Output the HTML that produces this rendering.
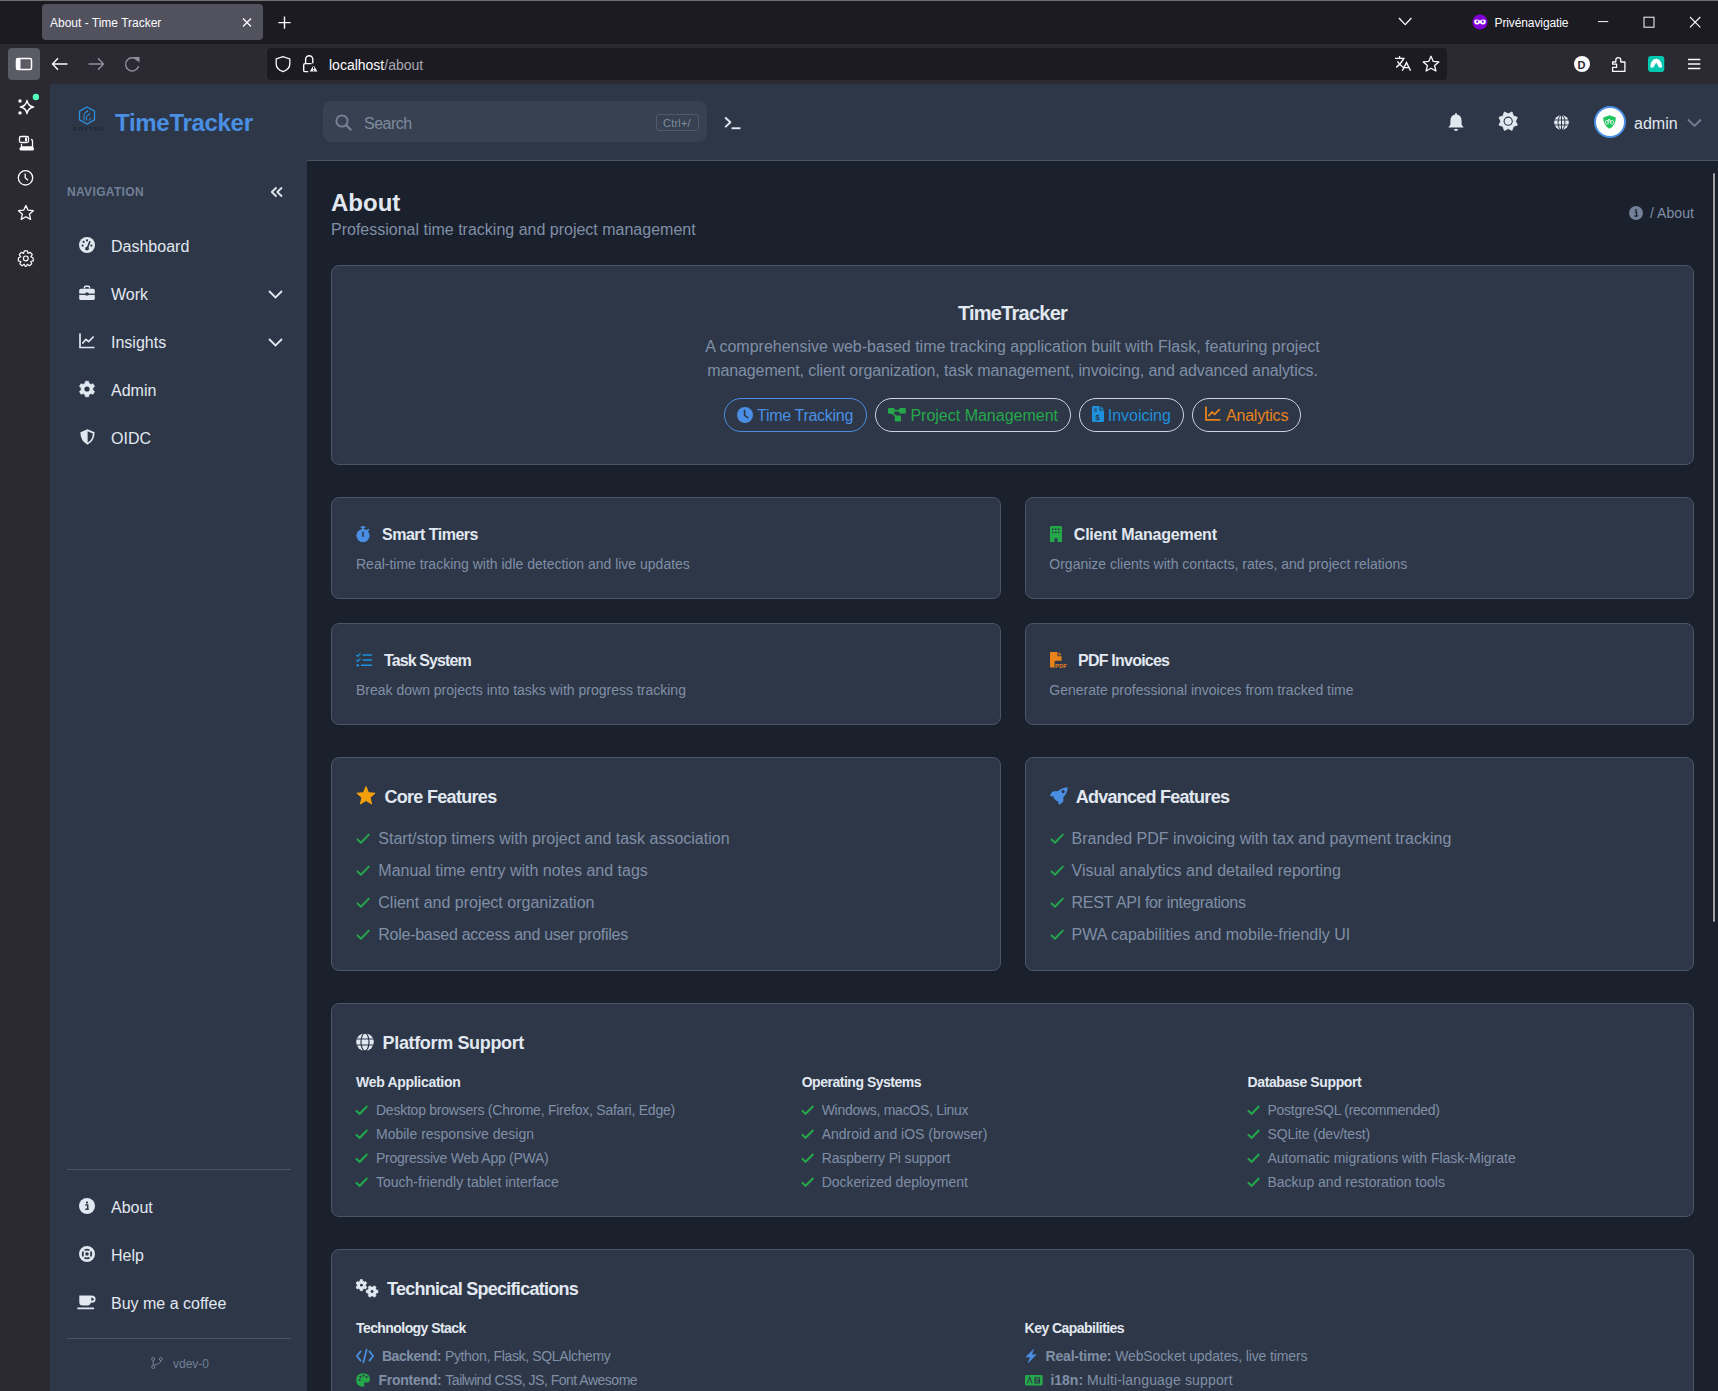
<!DOCTYPE html>
<html><head><meta charset="utf-8"><title>About - Time Tracker</title>
<style>
*{box-sizing:border-box}
html,body{margin:0;padding:0}
body{width:1718px;height:1391px;overflow:hidden;position:relative;background:#1a202c;font-family:"Liberation Sans",sans-serif;color:#e2e8f0}
.abs{position:absolute}
.t{position:absolute;white-space:nowrap}
svg{display:block}
.card{position:absolute;background:#2d3748;border:1px solid #4a5568;border-radius:8px}
.ic{position:absolute;overflow:visible}
</style></head>
<body>
<svg class="abs" style="left:0;top:0" width="1718" height="84" viewBox="0 0 1718 84">
  <rect x="0" y="0" width="1718" height="1" fill="#6f6f70"/>
  <rect x="0" y="1" width="1718" height="43" fill="#1c1b22"/>
  <rect x="42" y="4" width="221" height="36" rx="4" fill="#52515e"/>
  <text x="50" y="26.5" font-family="Liberation Sans" font-size="12" fill="#fbfbfe">About - Time Tracker</text>
  <path d="M243 18.5 L251 26.5 M251 18.5 L243 26.5" stroke="#fbfbfe" stroke-width="1.3" fill="none"/>
  <path d="M284.5 16.5 V28.8 M278.4 22.6 H290.6" stroke="#fbfbfe" stroke-width="1.4" fill="none"/>
  <path d="M1399 18 L1405.2 24.6 L1411.4 18" stroke="#fbfbfe" stroke-width="1.3" fill="none"/>
  <circle cx="1480" cy="22" r="7.6" fill="#8000d7"/>
  <path d="M1474.2 20.2 Q1476.8 18.6 1480 20.4 Q1483.2 18.6 1485.8 20.2 Q1486.2 24.4 1483 24.6 Q1481 24.6 1480 23 Q1479 24.6 1477 24.6 Q1473.8 24.4 1474.2 20.2Z" fill="#fff"/>
  <circle cx="1477.3" cy="21.7" r="1.1" fill="#8000d7"/><circle cx="1482.7" cy="21.7" r="1.1" fill="#8000d7"/>
  <text x="1494.5" y="27" font-family="Liberation Sans" font-size="12" fill="#fbfbfe" textLength="74">Privénavigatie</text>
  <path d="M1598 21.6 H1608.2" stroke="#fbfbfe" stroke-width="1" fill="none"/>
  <rect x="1644" y="17.2" width="10" height="10" fill="none" stroke="#fbfbfe" stroke-width="1"/>
  <path d="M1690 17 L1700.3 27.3 M1700.3 17 L1690 27.3" stroke="#fbfbfe" stroke-width="1.1" fill="none"/>
  <rect x="0" y="44" width="1718" height="40" fill="#2b2a33"/>
  <rect x="8" y="48" width="32" height="32" rx="4" fill="#5b5b66"/>
  <rect x="16.5" y="58.5" width="15" height="11" rx="1.5" fill="none" stroke="#fbfbfe" stroke-width="1.5"/>
  <rect x="16.5" y="58.5" width="4" height="11" fill="#fbfbfe"/>
  <path d="M52.5 64 H67.5 M58 58.3 L52.5 64 L58 69.7" stroke="#fbfbfe" stroke-width="1.4" fill="none"/>
  <path d="M88.5 64 H103.5 M98 58.3 L103.5 64 L98 69.7" stroke="#8f8f9d" stroke-width="1.4" fill="none"/>
  <path d="M137.6 60.5 A6.6 6.6 0 1 0 138.6 66" stroke="#8f8f9d" stroke-width="1.4" fill="none"/>
  <path d="M133.5 57 L139.5 57 L139.5 62.5 Z" fill="#8f8f9d"/>
  <rect x="267" y="48" width="1180" height="32" rx="4" fill="#1c1b22"/>
  <path d="M283 56.6 L276.2 59 V64 Q276.2 69.2 283 71.6 Q289.8 69.2 289.8 64 V59 Z" stroke="#fbfbfe" stroke-width="1.3" fill="none"/>
  <path d="M305.6 63.4 V59.4 A3.6 3.6 0 0 1 312.8 59.4 V63.4" stroke="#fbfbfe" stroke-width="1.4" fill="none"/>
  <path d="M311.6 63.6 H305 Q303.7 63.6 303.7 64.9 V70.4 Q303.7 71.6 305 71.6 H308.4" stroke="#fbfbfe" stroke-width="1.4" fill="none"/>
  <path d="M313.6 64 L318.4 72 H308.8 Z" fill="#fbfbfe" stroke="#1c1b22" stroke-width="1.2" stroke-linejoin="round"/>
  <path d="M313.6 66.4 V69.3" stroke="#1c1b22" stroke-width="1.2"/><circle cx="313.6" cy="70.6" r="0.65" fill="#1c1b22"/>
  <text x="329" y="69.6" font-family="Liberation Sans" font-size="14" fill="#fbfbfe">localhost<tspan fill="#a9a9b3">/about</tspan></text>
  <path d="M1395 58.3 H1404.6 M1399.6 56 V58.3 M1403.8 58.4 Q1400.5 64.5 1396.2 67.4 M1397.4 61.4 Q1400 65 1403.6 67.8" stroke="#fbfbfe" stroke-width="1.3" fill="none"/>
  <path d="M1402.3 70.8 L1406.5 62.6 L1410.6 70.8 M1403.8 67.6 H1409.2" stroke="#fbfbfe" stroke-width="1.4" fill="none"/>
  <path d="M1431 56.3 L1433.3 61.4 L1438.8 61.9 L1434.6 65.6 L1435.9 71 L1431 68.2 L1426.1 71 L1427.4 65.6 L1423.2 61.9 L1428.7 61.4 Z" stroke="#fbfbfe" stroke-width="1.3" fill="none" stroke-linejoin="round"/>
  <circle cx="1582" cy="64" r="8" fill="#fbfbfe"/>
  <text x="1577.6" y="68.6" font-family="Liberation Sans" font-size="11" font-weight="bold" fill="#2b2a33">D</text>
  <path d="M1612.6 62 H1615.8 V60.2 A2.5 2.5 0 0 1 1620.8 60.2 V62 H1624.9 V71.4 H1612.6 V67.4 H1616.6 V64.2 H1612.6 Z" stroke="#fbfbfe" stroke-width="1.3" fill="none" stroke-linejoin="round"/>
  <rect x="1648" y="56" width="16.3" height="16" rx="3" fill="#00c9b1"/>
  <path d="M1650.4 67.4 C1650.4 56 1662 56 1662 67.4 L1659 67.4 L1656.2 62.4 L1653.4 67.4 Z" fill="#fff"/>
  <path d="M1688 59.5 H1700.3 M1688 64 H1700.3 M1688 68.5 H1700.3" stroke="#fbfbfe" stroke-width="1.4" fill="none"/>
</svg>
<svg class="abs" style="left:0;top:84px" width="50" height="1307" viewBox="0 84 50 1307">
  <rect x="0" y="84" width="50" height="1307" fill="#2b2a33"/>
  <circle cx="35.9" cy="97" r="3.2" fill="#54ffbd"/>
  <path d="M27 100.5 Q28 106 33.6 107 Q28 108 27 113.5 Q26 108 20.4 107 Q26 106 27 100.5Z" stroke="#fbfbfe" stroke-width="1.4" fill="none" stroke-linejoin="round"/>
  <circle cx="20" cy="101" r="1.7" fill="#fbfbfe"/><circle cx="20" cy="112.9" r="1.7" fill="#fbfbfe"/>
  <rect x="19.5" y="136.5" width="9" height="6" rx="1.5" stroke="#fbfbfe" stroke-width="1.3" fill="none"/>
  <rect x="25" y="137.5" width="2" height="4" fill="#fbfbfe"/>
  <path d="M31 139.5 Q32.5 139.5 32.5 141 V147 H21.5 V144" stroke="#fbfbfe" stroke-width="1.3" fill="none"/>
  <rect x="19.5" y="147" width="14.5" height="3.6" rx="1.6" fill="#fbfbfe"/>
  <circle cx="25.5" cy="177.8" r="7.2" stroke="#fbfbfe" stroke-width="1.3" fill="none"/>
  <path d="M25.2 173.5 V177.8 L28 180.3" stroke="#fbfbfe" stroke-width="1.3" fill="none"/>
  <path d="M25.9 205.4 L28.1 210.2 L33.3 210.7 L29.4 214.2 L30.6 219.4 L25.9 216.7 L21.2 219.4 L22.4 214.2 L18.5 210.7 L23.7 210.2 Z" stroke="#fbfbfe" stroke-width="1.3" fill="none" stroke-linejoin="round"/>
  <path id="fxgear" d="M24.4 250.8 H27.4 L28 253.4 L30.4 252.3 L32.3 254.6 L30.8 256.8 L33.2 258 V260.9 L30.7 261.5 L31.8 263.9 L29.5 265.8 L27.4 264.3 L26.1 266.5 H25.4 L24.2 264.3 L22 265.8 L19.8 263.9 L20.9 261.5 L18.4 260.9 V258 L20.8 256.8 L19.3 254.6 L21.2 252.3 L23.6 253.4 Z" stroke="#fbfbfe" stroke-width="1.2" fill="none" stroke-linejoin="round"/>
  <circle cx="25.8" cy="258.4" r="2.4" stroke="#fbfbfe" stroke-width="1.2" fill="none"/>
</svg>

<div class="abs" style="left:50px;top:84px;width:257px;height:1307px;background:#2d3748"></div>
<div class="abs" style="left:307px;top:84px;width:1411px;height:77px;background:#2d3748;border-bottom:1px solid #4a5568"></div>
<div class="abs" style="left:1712px;top:172px;width:4px;height:751px;background:#151a24;border-radius:2px"></div>
<div class="abs" style="left:1713px;top:173px;width:2px;height:749px;background:#a3a3a3;border-radius:1px"></div>
<svg class="ic" style="left:78px;top:106px" width="18" height="19" viewBox="0 0 18 19"><path d="M9 1 L16.5 5.2 V13.8 L9 18 L1.5 13.8 V5.2 Z" fill="none" stroke="#2f8fe0" stroke-width="1.3"/><path d="M6 14.5 V9.5 Q6 6.5 9 5.5 M8.5 14.5 V11 Q8.5 9 11 8.5 M11.5 14.5 Q11.5 12.5 13 12" fill="none" stroke="#2f8fe0" stroke-width="1"/><circle cx="9.3" cy="5.3" r="1" fill="#2f8fe0"/><circle cx="11.2" cy="8.3" r="0.9" fill="#2f8fe0"/></svg>
<div class="t" style="left:73px;top:124px;font-size:11px;line-height:11px;color:#1f2633;font-weight:bold;letter-spacing:1.2px;font-size:6px;">DRYTRA</div>
<div class="t" style="left:115px;top:111px;font-size:24px;line-height:24px;color:#4a8fe3;font-weight:bold;letter-spacing:-0.3px;">TimeTracker</div>
<div class="t" style="left:67px;top:186px;font-size:12px;line-height:12px;color:#718096;font-weight:bold;letter-spacing:0.34px;">NAVIGATION</div>
<svg class="ic" style="left:270px;top:186px" width="14" height="12" viewBox="0 0 14 12"><path d="M6.5 1.5 L1.8 6 L6.5 10.5 M12 1.5 L7.3 6 L12 10.5" fill="none" stroke="#e2e8f0" stroke-width="1.8" stroke-linejoin="round"/></svg>
<svg class="ic" style="left:268px;top:290px" width="15" height="9" viewBox="0 0 15 9"><path d="M1 1 L7.5 7.5 L14 1" fill="none" stroke="#e2e8f0" stroke-width="1.8"/></svg>
<svg class="ic" style="left:268px;top:338px" width="15" height="9" viewBox="0 0 15 9"><path d="M1 1 L7.5 7.5 L14 1" fill="none" stroke="#e2e8f0" stroke-width="1.8"/></svg>
<div class="t" style="left:111px;top:239px;font-size:16px;line-height:16px;color:#e2e8f0;">Dashboard</div>
<div class="t" style="left:111px;top:287px;font-size:16px;line-height:16px;color:#e2e8f0;">Work</div>
<div class="t" style="left:111px;top:335px;font-size:16px;line-height:16px;color:#e2e8f0;">Insights</div>
<div class="t" style="left:111px;top:383px;font-size:16px;line-height:16px;color:#e2e8f0;">Admin</div>
<div class="t" style="left:111px;top:431px;font-size:16px;line-height:16px;color:#e2e8f0;">OIDC</div>
<svg class="ic" style="left:79px;top:237px" width="16" height="16" viewBox="0 0 16 16"><circle cx="8" cy="8" r="8" fill="#e2e8f0"/><path d="M8 12 L10.8 4.8" stroke="#2d3748" stroke-width="1.7" stroke-linecap="round"/><circle cx="8" cy="11.6" r="1.9" fill="#2d3748"/><circle cx="3.6" cy="8.6" r="1.1" fill="#2d3748"/><circle cx="4.6" cy="4.9" r="1.1" fill="#2d3748"/><circle cx="8" cy="3.4" r="1.1" fill="#2d3748"/><circle cx="12.4" cy="8.6" r="1.1" fill="#2d3748"/></svg>
<svg class="ic" style="left:79px;top:285px" width="16" height="16" viewBox="0 0 16 16"><path d="M5.5 3.5 V2.2 Q5.5 1.2 6.5 1.2 H9.5 Q10.5 1.2 10.5 2.2 V3.5" fill="none" stroke="#e2e8f0" stroke-width="1.5"/><rect x="0.2" y="3.8" width="15.6" height="11.2" rx="1.6" fill="#e2e8f0"/><rect x="0" y="8.6" width="16" height="1.3" fill="#2d3748"/><rect x="6.5" y="7.6" width="3" height="3" rx="0.5" fill="#2d3748"/></svg>
<svg class="ic" style="left:79px;top:333px" width="16" height="16" viewBox="0 0 16 16"><path d="M1 0.5 V14.5 H15.5" fill="none" stroke="#e2e8f0" stroke-width="1.7"/><path d="M3.8 10 L7 6.3 L9.6 8.6 L14.2 4" fill="none" stroke="#e2e8f0" stroke-width="1.7" stroke-linejoin="round" stroke-linecap="round"/></svg>
<svg class="ic" style="left:79px;top:381px" width="16" height="16" viewBox="0 0 16 16"><path d="M6.03 2.33 L6.43 0.16 L9.57 0.16 L9.97 2.33 L11.93 3.46 L14.01 2.72 L15.58 5.44 L13.89 6.87 L13.89 9.13 L15.58 10.56 L14.01 13.28 L11.93 12.54 L9.97 13.67 L9.57 15.84 L6.43 15.84 L6.03 13.67 L4.07 12.54 L1.99 13.28 L0.42 10.56 L2.11 9.13 L2.11 6.87 L0.42 5.44 L1.99 2.72 L4.07 3.46Z" fill="#e2e8f0" stroke="#e2e8f0" stroke-width="0.6" stroke-linejoin="round"/><circle cx="8" cy="8" r="2.6" fill="#2d3748"/></svg>
<svg class="ic" style="left:80px;top:429px" width="15" height="16" viewBox="0 0 15 16"><path d="M7.5 0.3 L14.6 3.2 Q14.8 11.5 7.5 15.7 Q0.2 11.5 0.4 3.2 Z" fill="#e2e8f0"/><path d="M7.6 2.3 L12.8 4.5 Q12.8 10.8 7.6 13.6 Z" fill="#2d3748"/></svg>
<div class="abs" style="left:67px;top:1169px;width:224px;height:1px;background:#4a5568"></div>
<div class="abs" style="left:67px;top:1338px;width:224px;height:1px;background:#4a5568"></div>
<div class="t" style="left:111px;top:1200px;font-size:16px;line-height:16px;color:#e2e8f0;">About</div>
<div class="t" style="left:111px;top:1248px;font-size:16px;line-height:16px;color:#e2e8f0;">Help</div>
<div class="t" style="left:111px;top:1296px;font-size:16px;line-height:16px;color:#e2e8f0;">Buy me a coffee</div>
<svg class="ic" style="left:79px;top:1198px" width="16" height="16" viewBox="0 0 16 16"><circle cx="8" cy="8" r="8" fill="#e2e8f0"/><circle cx="8" cy="4.6" r="1.1" fill="#2d3748"/><path d="M6.3 7 H8.7 V11 M6.3 11.3 H9.8" stroke="#2d3748" stroke-width="1.5" fill="none"/></svg>
<svg class="ic" style="left:79px;top:1246px" width="16" height="16" viewBox="0 0 16 16"><circle cx="8" cy="8" r="6.6" fill="none" stroke="#e2e8f0" stroke-width="2.8"/><circle cx="8" cy="8" r="2.6" fill="none" stroke="#e2e8f0" stroke-width="1.6"/><path d="M3.6 3.6 L6 6 M12.4 3.6 L10 6 M3.6 12.4 L6 10 M12.4 12.4 L10 10" stroke="#e2e8f0" stroke-width="1.6"/><path d="M1.2 5.2 A7.2 7.2 0 0 1 5.2 1.2 M10.8 1.2 A7.2 7.2 0 0 1 14.8 5.2 M14.8 10.8 A7.2 7.2 0 0 1 10.8 14.8 M5.2 14.8 A7.2 7.2 0 0 1 1.2 10.8" stroke="#2d3748" stroke-width="0" fill="none"/></svg>
<svg class="ic" style="left:77px;top:1295px" width="20" height="15" viewBox="0 0 20 15"><path d="M2.3 0.6 H14.5 Q18.6 0.6 18.6 4.2 Q18.6 7.8 14.5 7.8 H13.8 Q13.2 10.6 10 10.6 H5.6 Q2.3 10.6 2.3 7.3 Z" fill="#e2e8f0"/><path d="M14.3 2.6 Q16.7 2.6 16.7 4.2 Q16.7 5.8 14.3 5.8 Z" fill="#2d3748"/><rect x="0.3" y="12.4" width="16.8" height="1.9" rx="0.4" fill="#e2e8f0"/></svg>
<svg class="ic" style="left:151px;top:1357px" width="12" height="12" viewBox="0 0 12 12"><circle cx="2.2" cy="2" r="1.5" fill="none" stroke="#718096" stroke-width="1"/><circle cx="2.2" cy="10" r="1.5" fill="none" stroke="#718096" stroke-width="1"/><circle cx="9.8" cy="2" r="1.5" fill="none" stroke="#718096" stroke-width="1"/><path d="M2.2 3.5 V8.5 M9.8 3.5 Q9.8 6.8 2.8 8.2" fill="none" stroke="#718096" stroke-width="1"/></svg>
<div class="t" style="left:173px;top:1358px;font-size:12px;line-height:12px;color:#718096;">vdev-0</div>
<div class="abs" style="left:323px;top:101px;width:384px;height:41px;background:#374151;border-radius:8px"></div>
<svg class="ic" style="left:335px;top:114px" width="17" height="17" viewBox="0 0 17 17"><circle cx="7" cy="7" r="5.6" fill="none" stroke="#718096" stroke-width="2"/><path d="M11 11 L15.6 15.6" stroke="#718096" stroke-width="2.2" stroke-linecap="round"/></svg>
<div class="t" style="left:364px;top:116px;font-size:16px;line-height:16px;color:#7e8b9f;letter-spacing:-0.5px;">Search</div>
<div class="abs" style="left:656px;top:114px;width:43px;height:17px;border:1px solid #4f5a6b;border-radius:3px"></div>
<div class="t" style="left:663px;top:118px;font-size:11px;line-height:11px;color:#7e8b9f;letter-spacing:0.2px;">Ctrl+/</div>
<svg class="ic" style="left:724px;top:116px" width="17" height="14" viewBox="0 0 17 14"><path d="M1.2 1.5 L6.4 6.3 L1.2 11.1" fill="none" stroke="#e2e8f0" stroke-width="1.9" stroke-linejoin="round"/><rect x="7.6" y="11.3" width="8.8" height="1.9" fill="#e2e8f0"/></svg>
<svg class="ic" style="left:1447px;top:112px" width="18" height="20" viewBox="0 0 18 20"><path d="M9 1 Q9.9 1 9.9 2 V2.6 Q14.6 3.4 14.6 9 V12.6 L16.6 15.6 H1.4 L3.4 12.6 V9 Q3.4 3.4 8.1 2.6 V2 Q8.1 1 9 1Z" fill="#e2e8f0"/><path d="M7 17 H11 Q11 19 9 19 Q7 19 7 17Z" fill="#e2e8f0"/></svg>
<svg class="ic" style="left:1498px;top:111px" width="21" height="21" viewBox="0 0 21 21"><path d="M14.03 0.96 L15.43 4.97 L19.44 6.37 L17.60 10.20 L19.44 14.03 L15.43 15.43 L14.03 19.44 L10.20 17.60 L6.37 19.44 L4.97 15.43 L0.96 14.03 L2.80 10.20 L0.96 6.37 L4.97 4.97 L6.37 0.96 L10.20 2.80Z" fill="#e2e8f0" stroke="#e2e8f0" stroke-width="0.8" stroke-linejoin="round"/><circle cx="10.2" cy="10.2" r="4.6" fill="#2d3748"/><circle cx="10.2" cy="10.2" r="3.5" fill="#e2e8f0"/></svg>
<svg class="ic" style="left:1554px;top:115px" width="15" height="15" viewBox="0 0 15 15"><circle cx="7.5" cy="7.5" r="7.3" fill="#e2e8f0"/><path d="M0 5 H15 M0 10 H15" stroke="#2d3748" stroke-width="1.1"/><path d="M7.5 0 V15" stroke="#2d3748" stroke-width="1"/><ellipse cx="7.5" cy="7.5" rx="3.4" ry="7.3" fill="none" stroke="#2d3748" stroke-width="1"/></svg>
<div class="abs" style="left:1594px;top:106px;width:32px;height:32px;border-radius:50%;background:#fff;border:2px solid #4a8fe3"></div>
<svg class="ic" style="left:1603px;top:115px" width="13" height="14" viewBox="0 0 13 14"><path d="M6.5 0.3 L12.8 2.5 Q13 10.3 6.5 13.7 Q0 10.3 0.2 2.5 Z" fill="#22c55e"/><circle cx="4" cy="7.3" r="1.8" fill="none" stroke="#fff" stroke-width="0.8"/><circle cx="9" cy="7.3" r="1.8" fill="none" stroke="#fff" stroke-width="0.8"/><path d="M4 7.3 L6 4.6 L9 7.3 M5.2 4.6 H7" stroke="#fff" stroke-width="0.8" fill="none"/></svg>
<div class="t" style="left:1634px;top:116px;font-size:16px;line-height:16px;color:#e2e8f0;">admin</div>
<svg class="ic" style="left:1687px;top:118px" width="15" height="10" viewBox="0 0 15 10"><path d="M1 1.5 L7.5 8 L14 1.5" fill="none" stroke="#718096" stroke-width="1.8"/></svg>
<div class="t" style="left:331px;top:191px;font-size:24px;line-height:24px;color:#e2e8f0;font-weight:bold;">About</div>
<div class="t" style="left:331px;top:222px;font-size:16px;line-height:16px;color:#808fa6;">Professional time tracking and project management</div>
<svg class="ic" style="left:1629px;top:206px" width="14" height="14" viewBox="0 0 14 14"><circle cx="7" cy="7" r="7" fill="#718096"/><circle cx="7" cy="4" r="1" fill="#1a202c"/><path d="M5.6 6.2 H7.6 V9.8 M5.5 10 H8.8" stroke="#1a202c" stroke-width="1.3" fill="none"/></svg>
<div class="t" style="left:1650px;top:206px;font-size:14px;line-height:14px;color:#808fa6;letter-spacing:0.05px;">/ About</div>
<div class="card" style="left:331px;top:265px;width:1363px;height:200px"></div>
<div class="card" style="left:331px;top:497px;width:670px;height:102px"></div>
<div class="card" style="left:1025px;top:497px;width:669px;height:102px"></div>
<div class="card" style="left:331px;top:623px;width:670px;height:102px"></div>
<div class="card" style="left:1025px;top:623px;width:669px;height:102px"></div>
<div class="card" style="left:331px;top:757px;width:670px;height:214px"></div>
<div class="card" style="left:1025px;top:757px;width:669px;height:214px"></div>
<div class="card" style="left:331px;top:1003px;width:1363px;height:214px"></div>
<div class="card" style="left:331px;top:1249px;width:1363px;height:200px"></div>
<div class="t" style="left:331px;width:1363px;text-align:center;top:303px;font-size:20px;line-height:20px;font-weight:bold;letter-spacing:-0.77px;color:#e2e8f0">TimeTracker</div>
<div class="t" style="left:331px;width:1363px;text-align:center;top:339px;font-size:16px;line-height:16px;color:#808fa6">A comprehensive web-based time tracking application built with Flask, featuring project</div>
<div class="t" style="left:331px;width:1363px;text-align:center;top:363px;font-size:16px;line-height:16px;letter-spacing:-0.1px;color:#808fa6">management, client organization, task management, invoicing, and advanced analytics.</div>
<div class="abs" style="left:724px;top:398px;width:143px;height:34px;border:1px solid #4a8fe3;border-radius:17px"></div>
<div class="abs" style="left:875px;top:398px;width:196px;height:34px;border:1px solid #cfd4dc;border-radius:17px"></div>
<div class="abs" style="left:1079px;top:398px;width:105px;height:34px;border:1px solid #cfd4dc;border-radius:17px"></div>
<div class="abs" style="left:1192px;top:398px;width:109px;height:34px;border:1px solid #cfd4dc;border-radius:17px"></div>
<div class="t" style="left:757px;top:408px;font-size:16px;line-height:16px;color:#4a8fe3;letter-spacing:-0.3px;">Time Tracking</div>
<div class="t" style="left:910.4px;top:408px;font-size:16px;line-height:16px;color:#25a84a;">Project Management</div>
<div class="t" style="left:1107.7px;top:408px;font-size:16px;line-height:16px;color:#1e90dc;">Invoicing</div>
<div class="t" style="left:1226px;top:408px;font-size:16px;line-height:16px;color:#e8821a;letter-spacing:-0.2px;">Analytics</div>
<svg class="ic" style="left:737px;top:407px" width="16" height="16" viewBox="0 0 16 16"><circle cx="8" cy="8" r="8" fill="#4a8fe3"/><path d="M7.6 3.6 V8.4 L10.8 10.6" stroke="#2d3748" stroke-width="1.7" fill="none" stroke-linecap="round"/></svg>
<svg class="ic" style="left:888px;top:407px" width="18" height="15" viewBox="0 0 18 15"><rect x="0" y="1" width="6.4" height="5.8" rx="1" fill="#25a84a"/><rect x="11.2" y="1" width="6.6" height="5.4" rx="1" fill="#25a84a"/><rect x="6.8" y="8.6" width="6.2" height="5.8" rx="1" fill="#25a84a"/><path d="M5 3.6 H12 M3.4 5.5 L8.6 10" stroke="#25a84a" stroke-width="1.6"/></svg>
<svg class="ic" style="left:1092px;top:406px" width="12" height="16" viewBox="0 0 12 16"><path d="M0 1.2 Q0 0 1.2 0 H7.5 V4.5 H12 V14.8 Q12 16 10.8 16 H1.2 Q0 16 0 14.8 Z" fill="#1e90dc"/><path d="M8.5 0 L12 3.5 H8.5 Z" fill="#1e90dc"/><text x="3.4" y="13.5" font-family="Liberation Sans" font-size="7.5" font-weight="bold" fill="#2d3748">$</text><path d="M2 3 H5 M2 5 H5" stroke="#2d3748" stroke-width="0.9"/></svg>
<svg class="ic" style="left:1205px;top:406px" width="16" height="15" viewBox="0 0 16 15"><path d="M1 0.5 V13.8 H15.5" fill="none" stroke="#e8821a" stroke-width="1.8"/><path d="M3.8 9.6 L7 6 L9.6 8.3 L14.3 3.6" fill="none" stroke="#e8821a" stroke-width="1.8" stroke-linejoin="round" stroke-linecap="round"/></svg>
<div class="t" style="left:382px;top:527px;font-size:16px;line-height:16px;color:#e2e8f0;font-weight:bold;letter-spacing:-0.5px;">Smart Timers</div>
<div class="t" style="left:356px;top:557px;font-size:14px;line-height:14px;color:#808fa6;">Real-time tracking with idle detection and live updates</div>
<div class="t" style="left:1073.8px;top:527px;font-size:16px;line-height:16px;color:#e2e8f0;font-weight:bold;letter-spacing:-0.22px;">Client Management</div>
<div class="t" style="left:1049.3px;top:557px;font-size:14px;line-height:14px;color:#808fa6;">Organize clients with contacts, rates, and project relations</div>
<div class="t" style="left:384px;top:653px;font-size:16px;line-height:16px;color:#e2e8f0;font-weight:bold;letter-spacing:-0.89px;">Task System</div>
<div class="t" style="left:356px;top:683px;font-size:14px;line-height:14px;color:#808fa6;">Break down projects into tasks with progress tracking</div>
<div class="t" style="left:1078px;top:653px;font-size:16px;line-height:16px;color:#e2e8f0;font-weight:bold;letter-spacing:-0.77px;">PDF Invoices</div>
<div class="t" style="left:1049.3px;top:683px;font-size:14px;line-height:14px;color:#808fa6;">Generate professional invoices from tracked time</div>
<svg class="ic" style="left:356px;top:526px" width="15" height="17" viewBox="0 0 15 17"><circle cx="7" cy="9.6" r="6.6" fill="#4a8fe3"/><rect x="4.6" y="0.2" width="4.8" height="1.8" rx="0.8" fill="#4a8fe3"/><rect x="6.1" y="1.6" width="1.8" height="2.4" fill="#4a8fe3"/><path d="M11.4 4.6 L12.4 3.6" stroke="#4a8fe3" stroke-width="1.8" stroke-linecap="round"/><path d="M7 6.4 V10.2" stroke="#2d3748" stroke-width="1.6" stroke-linecap="round"/></svg>
<svg class="ic" style="left:1050px;top:526px" width="12" height="16" viewBox="0 0 12 16"><path d="M0 1.2 Q0 0 1.2 0 H10.8 Q12 0 12 1.2 V16 H7.6 V12.6 Q6 11.4 4.4 12.6 V16 H0 Z" fill="#25a84a"/><rect x="2" y="2.4" width="1.6" height="1.6" fill="#2d3748"/><rect x="2" y="5.6" width="1.6" height="1.6" fill="#2d3748"/><rect x="5" y="2.4" width="1.6" height="1.6" fill="#2d3748"/><rect x="5" y="5.6" width="1.6" height="1.6" fill="#2d3748"/><rect x="8" y="2.4" width="1.6" height="1.6" fill="#2d3748"/><rect x="8" y="5.6" width="1.6" height="1.6" fill="#2d3748"/></svg>
<svg class="ic" style="left:356px;top:653px" width="16" height="14" viewBox="0 0 16 14"><path d="M0.6 2.3 L1.8 3.4 L4 0.8 M0.6 7.3 L1.8 8.4 L4 5.8" stroke="#1e90dc" stroke-width="1.3" fill="none" stroke-linecap="round"/><circle cx="1.8" cy="12.2" r="1.3" fill="#1e90dc"/><path d="M6.6 2 H16 M6.6 7 H16 M5 12.2 H16" stroke="#1e90dc" stroke-width="1.5"/></svg>
<svg class="ic" style="left:1050px;top:652px" width="16" height="16" viewBox="0 0 16 16"><path d="M0 1.2 Q0 0 1.2 0 H7.5 V4.3 H11.6 V8.8 H6 Q4.6 8.8 4.6 10.2 V15.6 H1.2 Q0 15.6 0 14.4 Z" fill="#e8821a"/><path d="M8.6 0.2 L11.6 3.3 H8.6 Z" fill="#e8821a"/><text x="5" y="15.6" font-family="Liberation Sans" font-size="5.8" font-weight="bold" fill="#e8821a" letter-spacing="0.1">PDF</text></svg>
<div class="t" style="left:384.4px;top:788px;font-size:18px;line-height:18px;color:#e2e8f0;font-weight:bold;letter-spacing:-0.69px;">Core Features</div>
<div class="t" style="left:1075.7px;top:788px;font-size:18px;line-height:18px;color:#e2e8f0;font-weight:bold;letter-spacing:-0.74px;">Advanced Features</div>
<svg class="ic" style="left:356px;top:786px" width="20" height="20" viewBox="0 0 20 20"><path d="M10.00 0.60 L12.53 6.72 L19.13 7.23 L14.09 11.53 L15.64 17.97 L10.00 14.50 L4.36 17.97 L5.91 11.53 L0.87 7.23 L7.47 6.72Z" fill="#f59e0b" stroke="#f59e0b" stroke-width="1" stroke-linejoin="round"/></svg>
<svg class="ic" style="left:1049px;top:787px" width="20" height="19" viewBox="0 0 20 19"><path d="M18.7 0.2 C14.5 0.3 11.6 2.2 8.6 4.3 L4.6 4.3 Q2.6 4.6 0.9 8.9 L5 9.7 L4.6 10.9 L8 14.3 L9.2 13.9 L9.7 17.9 Q13.6 16.2 14.3 14.3 L14.3 10.3 Q16.6 8.1 17.6 5.6 Q18.6 3 18.7 0.2Z" fill="#4a8fe3"/><circle cx="14.1" cy="4.6" r="1.6" fill="#2d3748"/></svg>
<svg class="ic" style="left:356px;top:833px" width="14" height="11" viewBox="0 0 14 11"><path d="M0.98 6.05 L5.04 9.68 L13.30 1.10" stroke="#25a84a" stroke-width="2.0" fill="none"/></svg>
<div class="t" style="left:378.3px;top:831px;font-size:16px;line-height:16px;color:#808fa6;">Start/stop timers with project and task association</div>
<svg class="ic" style="left:1049.7px;top:833px" width="14" height="11" viewBox="0 0 14 11"><path d="M0.98 6.05 L5.04 9.68 L13.30 1.10" stroke="#25a84a" stroke-width="2.0" fill="none"/></svg>
<div class="t" style="left:1071.6px;top:831px;font-size:16px;line-height:16px;color:#808fa6;">Branded PDF invoicing with tax and payment tracking</div>
<svg class="ic" style="left:356px;top:865px" width="14" height="11" viewBox="0 0 14 11"><path d="M0.98 6.05 L5.04 9.68 L13.30 1.10" stroke="#25a84a" stroke-width="2.0" fill="none"/></svg>
<div class="t" style="left:378.3px;top:863px;font-size:16px;line-height:16px;color:#808fa6;">Manual time entry with notes and tags</div>
<svg class="ic" style="left:1049.7px;top:865px" width="14" height="11" viewBox="0 0 14 11"><path d="M0.98 6.05 L5.04 9.68 L13.30 1.10" stroke="#25a84a" stroke-width="2.0" fill="none"/></svg>
<div class="t" style="left:1071.6px;top:863px;font-size:16px;line-height:16px;color:#808fa6;">Visual analytics and detailed reporting</div>
<svg class="ic" style="left:356px;top:897px" width="14" height="11" viewBox="0 0 14 11"><path d="M0.98 6.05 L5.04 9.68 L13.30 1.10" stroke="#25a84a" stroke-width="2.0" fill="none"/></svg>
<div class="t" style="left:378.3px;top:895px;font-size:16px;line-height:16px;color:#808fa6;">Client and project organization</div>
<svg class="ic" style="left:1049.7px;top:897px" width="14" height="11" viewBox="0 0 14 11"><path d="M0.98 6.05 L5.04 9.68 L13.30 1.10" stroke="#25a84a" stroke-width="2.0" fill="none"/></svg>
<div class="t" style="left:1071.6px;top:895px;font-size:16px;line-height:16px;color:#808fa6;letter-spacing:-0.32px;">REST API for integrations</div>
<svg class="ic" style="left:356px;top:929px" width="14" height="11" viewBox="0 0 14 11"><path d="M0.98 6.05 L5.04 9.68 L13.30 1.10" stroke="#25a84a" stroke-width="2.0" fill="none"/></svg>
<div class="t" style="left:378.3px;top:927px;font-size:16px;line-height:16px;color:#808fa6;letter-spacing:-0.26px;">Role-based access and user profiles</div>
<svg class="ic" style="left:1049.7px;top:929px" width="14" height="11" viewBox="0 0 14 11"><path d="M0.98 6.05 L5.04 9.68 L13.30 1.10" stroke="#25a84a" stroke-width="2.0" fill="none"/></svg>
<div class="t" style="left:1071.6px;top:927px;font-size:16px;line-height:16px;color:#808fa6;">PWA capabilities and mobile-friendly UI</div>
<div class="t" style="left:382.6px;top:1034px;font-size:18px;line-height:18px;color:#e2e8f0;font-weight:bold;letter-spacing:-0.35px;">Platform Support</div>
<svg class="ic" style="left:356px;top:1033px" width="18" height="18" viewBox="0 0 18 18"><circle cx="9" cy="9" r="8.8" fill="#e2e8f0"/><path d="M0 6 H18 M0 12 H18" stroke="#2d3748" stroke-width="1.2"/><ellipse cx="9" cy="9" rx="4" ry="8.8" fill="none" stroke="#2d3748" stroke-width="1.2"/></svg>
<div class="t" style="left:356px;top:1075px;font-size:14px;line-height:14px;color:#e2e8f0;font-weight:bold;letter-spacing:-0.3px;">Web Application</div>
<svg class="ic" style="left:355.4px;top:1105px" width="13" height="10" viewBox="0 0 13 10"><path d="M0.91 5.50 L4.68 8.80 L12.35 1.00" stroke="#25a84a" stroke-width="2.0" fill="none"/></svg>
<div class="t" style="left:376px;top:1103px;font-size:14px;line-height:14px;color:#808fa6;letter-spacing:-0.24px;">Desktop browsers (Chrome, Firefox, Safari, Edge)</div>
<svg class="ic" style="left:355.4px;top:1129px" width="13" height="10" viewBox="0 0 13 10"><path d="M0.91 5.50 L4.68 8.80 L12.35 1.00" stroke="#25a84a" stroke-width="2.0" fill="none"/></svg>
<div class="t" style="left:376px;top:1127px;font-size:14px;line-height:14px;color:#808fa6;">Mobile responsive design</div>
<svg class="ic" style="left:355.4px;top:1153px" width="13" height="10" viewBox="0 0 13 10"><path d="M0.91 5.50 L4.68 8.80 L12.35 1.00" stroke="#25a84a" stroke-width="2.0" fill="none"/></svg>
<div class="t" style="left:376px;top:1151px;font-size:14px;line-height:14px;color:#808fa6;letter-spacing:-0.26px;">Progressive Web App (PWA)</div>
<svg class="ic" style="left:355.4px;top:1177px" width="13" height="10" viewBox="0 0 13 10"><path d="M0.91 5.50 L4.68 8.80 L12.35 1.00" stroke="#25a84a" stroke-width="2.0" fill="none"/></svg>
<div class="t" style="left:376px;top:1175px;font-size:14px;line-height:14px;color:#808fa6;">Touch-friendly tablet interface</div>
<div class="t" style="left:801.7px;top:1075px;font-size:14px;line-height:14px;color:#e2e8f0;font-weight:bold;letter-spacing:-0.48px;">Operating Systems</div>
<svg class="ic" style="left:801.1px;top:1105px" width="13" height="10" viewBox="0 0 13 10"><path d="M0.91 5.50 L4.68 8.80 L12.35 1.00" stroke="#25a84a" stroke-width="2.0" fill="none"/></svg>
<div class="t" style="left:821.7px;top:1103px;font-size:14px;line-height:14px;color:#808fa6;letter-spacing:-0.28px;">Windows, macOS, Linux</div>
<svg class="ic" style="left:801.1px;top:1129px" width="13" height="10" viewBox="0 0 13 10"><path d="M0.91 5.50 L4.68 8.80 L12.35 1.00" stroke="#25a84a" stroke-width="2.0" fill="none"/></svg>
<div class="t" style="left:821.7px;top:1127px;font-size:14px;line-height:14px;color:#808fa6;">Android and iOS (browser)</div>
<svg class="ic" style="left:801.1px;top:1153px" width="13" height="10" viewBox="0 0 13 10"><path d="M0.91 5.50 L4.68 8.80 L12.35 1.00" stroke="#25a84a" stroke-width="2.0" fill="none"/></svg>
<div class="t" style="left:821.7px;top:1151px;font-size:14px;line-height:14px;color:#808fa6;letter-spacing:-0.15px;">Raspberry Pi support</div>
<svg class="ic" style="left:801.1px;top:1177px" width="13" height="10" viewBox="0 0 13 10"><path d="M0.91 5.50 L4.68 8.80 L12.35 1.00" stroke="#25a84a" stroke-width="2.0" fill="none"/></svg>
<div class="t" style="left:821.7px;top:1175px;font-size:14px;line-height:14px;color:#808fa6;">Dockerized deployment</div>
<div class="t" style="left:1247.5px;top:1075px;font-size:14px;line-height:14px;color:#e2e8f0;font-weight:bold;letter-spacing:-0.37px;">Database Support</div>
<svg class="ic" style="left:1246.9px;top:1105px" width="13" height="10" viewBox="0 0 13 10"><path d="M0.91 5.50 L4.68 8.80 L12.35 1.00" stroke="#25a84a" stroke-width="2.0" fill="none"/></svg>
<div class="t" style="left:1267.5px;top:1103px;font-size:14px;line-height:14px;color:#808fa6;letter-spacing:-0.26px;">PostgreSQL (recommended)</div>
<svg class="ic" style="left:1246.9px;top:1129px" width="13" height="10" viewBox="0 0 13 10"><path d="M0.91 5.50 L4.68 8.80 L12.35 1.00" stroke="#25a84a" stroke-width="2.0" fill="none"/></svg>
<div class="t" style="left:1267.5px;top:1127px;font-size:14px;line-height:14px;color:#808fa6;letter-spacing:-0.15px;">SQLite (dev/test)</div>
<svg class="ic" style="left:1246.9px;top:1153px" width="13" height="10" viewBox="0 0 13 10"><path d="M0.91 5.50 L4.68 8.80 L12.35 1.00" stroke="#25a84a" stroke-width="2.0" fill="none"/></svg>
<div class="t" style="left:1267.5px;top:1151px;font-size:14px;line-height:14px;color:#808fa6;">Automatic migrations with Flask-Migrate</div>
<svg class="ic" style="left:1246.9px;top:1177px" width="13" height="10" viewBox="0 0 13 10"><path d="M0.91 5.50 L4.68 8.80 L12.35 1.00" stroke="#25a84a" stroke-width="2.0" fill="none"/></svg>
<div class="t" style="left:1267.5px;top:1175px;font-size:14px;line-height:14px;color:#808fa6;">Backup and restoration tools</div>
<div class="t" style="left:387px;top:1280px;font-size:18px;line-height:18px;color:#e2e8f0;font-weight:bold;letter-spacing:-0.74px;">Technical Specifications</div>
<svg class="ic" style="left:356px;top:1279px" width="23" height="19" viewBox="0 0 23 19"><path d="M3.94 2.15 L4.24 0.62 L6.56 0.62 L6.86 2.15 L8.18 2.92 L9.66 2.41 L10.81 4.41 L9.63 5.44 L9.63 6.96 L10.81 7.99 L9.66 9.99 L8.18 9.48 L6.86 10.25 L6.56 11.78 L4.24 11.78 L3.94 10.25 L2.62 9.48 L1.14 9.99 L-0.01 7.99 L1.17 6.96 L1.17 5.44 L-0.01 4.41 L1.14 2.41 L2.62 2.92Z" fill="#e2e8f0" stroke="#e2e8f0" stroke-width="0.6" stroke-linejoin="round"/><circle cx="5.4" cy="6.2" r="1.4" fill="#2d3748"/><path d="M20.33 10.98 L21.98 11.28 L21.98 13.72 L20.33 14.02 L19.54 15.40 L20.09 16.98 L17.98 18.20 L16.90 16.93 L15.30 16.93 L14.22 18.20 L12.11 16.98 L12.66 15.40 L11.87 14.02 L10.22 13.72 L10.22 11.28 L11.87 10.98 L12.66 9.60 L12.11 8.02 L14.22 6.80 L15.30 8.07 L16.90 8.07 L17.98 6.80 L20.09 8.02 L19.54 9.60Z" fill="#e2e8f0" stroke="#e2e8f0" stroke-width="0.6" stroke-linejoin="round"/><circle cx="16.1" cy="12.5" r="1.4" fill="#2d3748"/></svg>
<div class="t" style="left:356px;top:1321px;font-size:14px;line-height:14px;color:#e2e8f0;font-weight:bold;letter-spacing:-0.57px;">Technology Stack</div>
<div class="t" style="left:1024.6px;top:1321px;font-size:14px;line-height:14px;color:#e2e8f0;font-weight:bold;letter-spacing:-0.54px;">Key Capabilities</div>
<svg class="ic" style="left:356px;top:1349px" width="18" height="14" viewBox="0 0 18 14"><path d="M4.6 2.4 L0.9 7 L4.6 11.6 M13.4 2.4 L17.1 7 L13.4 11.6 M10.6 0.6 L7.4 13.4" stroke="#4a8fe3" stroke-width="1.8" fill="none" stroke-linecap="round" stroke-linejoin="round"/></svg>
<div class="t" style="left:382px;top:1349px;font-size:14px;line-height:14px;color:#808fa6"><b style="letter-spacing:-0.5px">Backend:</b> <span style="letter-spacing:-0.35px">Python, Flask, SQLAlchemy</span></div>
<svg class="ic" style="left:356px;top:1373px" width="14" height="14" viewBox="0 0 14 14"><path d="M7 0.2 Q13.8 0.2 13.8 6.4 Q13.8 9.6 10.6 9.6 H9.2 Q8 9.6 8 10.8 Q8 11.6 8.4 12.2 Q8.8 13.8 7 13.8 Q0.2 13.8 0.2 7 Q0.2 0.2 7 0.2Z" fill="#25a84a"/><circle cx="3.6" cy="7" r="1.1" fill="#2d3748"/><circle cx="4.4" cy="3.8" r="1.1" fill="#2d3748"/><circle cx="7.6" cy="2.6" r="1.1" fill="#2d3748"/><circle cx="10.6" cy="4" r="1.1" fill="#2d3748"/></svg>
<div class="t" style="left:378.4px;top:1373px;font-size:14px;line-height:14px;color:#808fa6"><b style="letter-spacing:-0.25px">Frontend:</b> <span style="letter-spacing:-0.5px">Tailwind CSS, JS, Font Awesome</span></div>
<svg class="ic" style="left:1025px;top:1349px" width="12" height="14" viewBox="0 0 12 14"><path d="M8.6 0.2 L1 8 H5.4 L3.2 13.8 L11 5.8 H6.6 Z" fill="#4a8fe3" stroke="#4a8fe3" stroke-width="0.6" stroke-linejoin="round"/></svg>
<div class="t" style="left:1045.6px;top:1349px;font-size:14px;line-height:14px;color:#808fa6"><b style="letter-spacing:-0.2px">Real-time:</b> <span style="letter-spacing:-0.12px">WebSocket updates, live timers</span></div>
<svg class="ic" style="left:1025px;top:1375px" width="18" height="11" viewBox="0 0 18 11"><rect x="0" y="0" width="17.6" height="10.4" rx="1.3" fill="#25a84a"/><path d="M2.4 8.4 L4.7 2.4 L7 8.4" stroke="#2d3748" stroke-width="1.1" fill="none"/><rect x="9.4" y="2.1" width="5.6" height="6.4" fill="#2d3748"/><path d="M10.4 3.4 H14 L12.6 5 M11.6 4.6 Q12 7 13.8 7.8 M12.4 5.4 L11 7.6" stroke="#25a84a" stroke-width="0.9" fill="none"/></svg>
<div class="t" style="left:1050.4px;top:1373px;font-size:14px;line-height:14px;color:#808fa6"><b>i18n:</b> <span style="letter-spacing:0.15px">Multi-language support</span></div>

</body></html>
